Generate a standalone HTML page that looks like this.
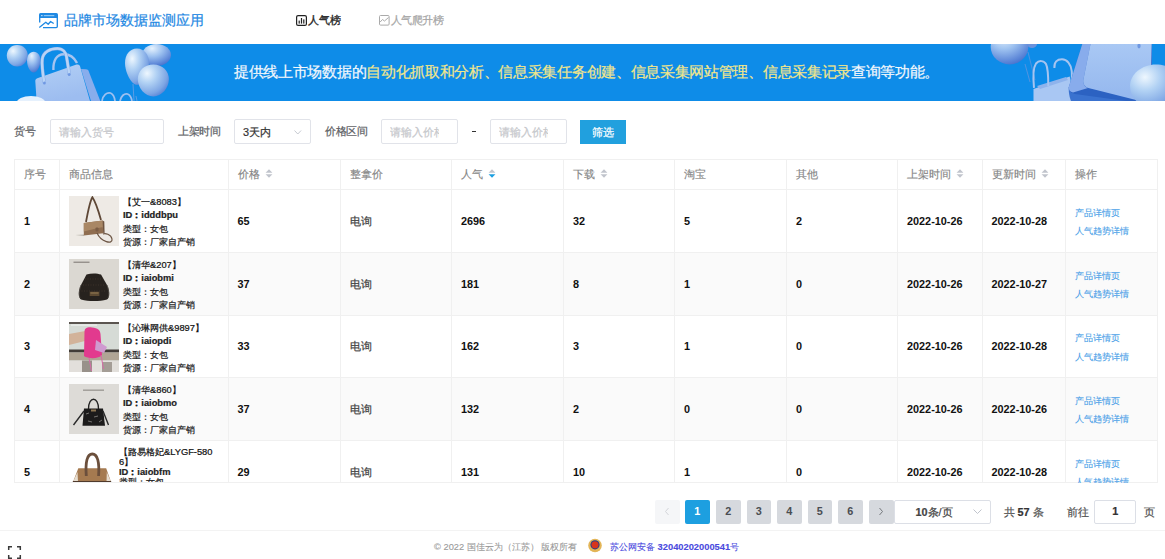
<!DOCTYPE html>
<html><head><meta charset="utf-8">
<style>
*{box-sizing:border-box;margin:0;padding:0}
html,body{width:1165px;height:559px;overflow:hidden;background:#fff}
body{font-family:"Liberation Sans",sans-serif;position:relative;color:#333;-webkit-text-stroke-width:0.22px}
.a{position:absolute;white-space:nowrap}
.title{left:64px;top:11px;font-size:14px;line-height:18px;color:#1f89e3}
.nav1{left:308px;top:11.8px;font-size:10.87px;line-height:16px;color:#2a2a2a;-webkit-text-stroke-width:0.35px;letter-spacing:-0.2px}
.nav2{left:390.5px;top:11.5px;font-size:10.87px;line-height:16px;color:#a6a6a6;letter-spacing:-0.5px}
.banner{left:0;top:44px;width:1165px;height:57px;background:#0e8ce8;overflow:hidden}
.btext{left:234px;top:63px;font-size:14.7px;line-height:18px;color:#f4f8fc;letter-spacing:-0.31px}
.btext b{font-weight:normal;color:#f2e68a}
.lbl{font-size:10.87px;line-height:14px;color:#606266;top:124px;letter-spacing:-0.35px}
.inp{top:119px;height:25px;border:1px solid #e1e3e9;border-radius:2px;background:#fff;overflow:hidden}
.ph{position:absolute;top:5px;font-size:10.87px;line-height:14px;color:#c6c8cc;white-space:nowrap}
.btn{left:580px;top:119.5px;width:46px;height:24.5px;background:#21a0de;border-radius:0;color:#fff;font-size:10.87px;line-height:24.5px;text-align:center}
.tbl{left:14.4px;top:159.5px;width:1143px;height:323px;overflow:hidden;border:1px solid #ebeef5;border-right:1px solid #ebeef5}
.row{position:absolute;left:0;width:1143px}
.hd{top:0;height:30px;border-bottom:1px solid #ebeef5;background:#fff}
.vl{position:absolute;top:0;width:1px;height:323px;background:#eef0f4}
.hl{position:absolute;left:0;width:1143px;height:1px;background:#ebeef5}
.th{position:absolute;top:9px;font-size:10.87px;line-height:13px;color:#858585;white-space:nowrap;-webkit-text-stroke-width:0.15px}
.td{position:absolute;font-size:10.87px;line-height:13px;color:#111;font-weight:bold;white-space:nowrap;-webkit-text-stroke-width:0}
.tdn{position:absolute;font-size:10.87px;line-height:13px;color:#444;white-space:nowrap}
.sort{display:inline-block;vertical-align:top;margin-left:5px;width:8px;height:9px;position:relative;top:1px}
.lk{position:absolute;font-size:9.32px;line-height:12px;color:#4a9fe8;white-space:nowrap;-webkit-text-stroke-width:0.12px}
.pi{position:absolute;font-size:9.32px;line-height:12px;color:#222;white-space:nowrap}
.pg{top:500px;width:24.5px;height:23.5px;border-radius:2px;background:#d6d9de;color:#4a4d52;font-weight:bold;-webkit-text-stroke-width:0;font-size:10.87px;line-height:23.5px;text-align:center}
.ftext{top:541px;font-size:9.32px;line-height:12px;color:#999;-webkit-text-stroke-width:0.1px}
</style></head><body>

<!-- header -->
<svg class="a" style="left:38px;top:12px" width="21" height="17" viewBox="0 0 21 17">
 <path d="M1 6 V2.6 Q1 1 2.6 1 H18.4 Q20 1 20 2.6 V6 Z" fill="#1f89e3"/>
 <rect x="3.2" y="3" width="1.3" height="1.2" fill="#cfe7fb"/>
 <rect x="5.8" y="3" width="10.5" height="1.2" fill="#8cc6f3"/>
 <path d="M1.7 5 V10.5 M19.3 5 V14.6 Q19.3 15.6 18.2 15.6 H5" fill="none" stroke="#1f89e3" stroke-width="1.35"/>
 <polyline points="1.3,15.5 7.8,10.2 10.2,12.2 12.6,9.5 15.7,11.5" fill="none" stroke="#1f89e3" stroke-width="1.3" stroke-linejoin="round"/>
</svg>
<div class="a title">品牌市场数据监测应用</div>

<svg class="a" style="left:296px;top:15px" width="11" height="11" viewBox="0 0 11 11">
 <rect x="0.6" y="0.6" width="9.8" height="9.8" rx="1.5" fill="none" stroke="#222" stroke-width="1.2"/>
 <rect x="2.6" y="5.6" width="1.2" height="3" fill="#222"/>
 <rect x="4.9" y="3" width="1.2" height="5.6" fill="#222"/>
 <rect x="7.2" y="4.4" width="1.2" height="4.2" fill="#222"/>
</svg>
<div class="a nav1">人气榜</div>
<svg class="a" style="left:379px;top:15px" width="11" height="11" viewBox="0 0 11 11">
 <rect x="0.5" y="0.5" width="9.6" height="9.6" rx="1" fill="none" stroke="#aaa" stroke-width="1"/>
 <polyline points="1.2,7 3.5,4.5 5.5,6 9.5,2.5" fill="none" stroke="#aaa" stroke-width="1"/>
</svg>
<div class="a nav2">人气爬升榜</div>

<!-- banner -->
<div class="a banner">
<svg width="1165" height="57" viewBox="0 44 1165 57" style="position:absolute;left:0;top:0">
 <defs>
  <radialGradient id="bl" cx="0.3" cy="0.28" r="0.85">
   <stop offset="0" stop-color="#eef7fe"/><stop offset="0.35" stop-color="#b2d2f4"/><stop offset="0.75" stop-color="#7ea6e4"/><stop offset="1" stop-color="#4d78d2"/>
  </radialGradient>
  <radialGradient id="bl2" cx="0.35" cy="0.2" r="0.9">
   <stop offset="0" stop-color="#e6f2fd"/><stop offset="0.4" stop-color="#9ec2f0"/><stop offset="0.8" stop-color="#5d87d8"/><stop offset="1" stop-color="#3f69c8"/>
  </radialGradient>
  <linearGradient id="bag" x1="0" y1="0" x2="0.3" y2="1">
   <stop offset="0" stop-color="#b2cff5"/><stop offset="1" stop-color="#9dbdf0"/>
  </linearGradient>
  <linearGradient id="bag2" x1="0" y1="0" x2="0" y2="1">
   <stop offset="0" stop-color="#a9c8f4"/><stop offset="1" stop-color="#94b7ee"/>
  </linearGradient>
 </defs>
 <!-- left -->
 <path d="M17.2 45 C23.5 45 27.8 50 27.8 55.5 C27.8 61.5 23 66.5 17.2 66.5 C11.2 66.5 6.8 61.5 6.8 55.5 C6.8 50 11 45 17.2 45Z" fill="url(#bl)"/>
 <path d="M33.7 51.7 C37.8 51.7 40.4 55.5 40.4 60.5 C40.4 66.5 37 72.4 33.7 72.4 C30.2 72.4 27 66.5 27 60.5 C27 55.5 29.6 51.7 33.7 51.7Z" fill="url(#bl2)"/>
 <path d="M53.4 70 C53 60 57 54.2 63.6 54.2 C70 54.2 74.5 58 77 63" fill="none" stroke="#a6c4f0" stroke-width="2.4"/>
 <path d="M81 69 L86 69.3 C87.5 69.4 88.2 70 88.6 71 L100.3 101 L91 101 Z" fill="#88adec"/>
 <path d="M38 78 L76.5 64.6 C78.5 64 79.6 64.8 80.1 66.5 L90 101 L36.6 101 L35.3 81 C35.2 79.6 36.2 78.6 38 78Z" fill="url(#bag)"/>
 <path d="M44.3 83 C43 75 41.5 65 42.2 59.3 C43.2 52 50 48.6 57.5 48.6 C63 48.6 66 52.5 66.6 57 C67.5 63 68.6 68 69.2 74.6" fill="none" stroke="#86a9e6" stroke-width="3.3"/>
 <path d="M44.3 83 C43 75 41.5 65 42.2 59.3 C43.2 52 50 48.6 57.5 48.6 C63 48.6 66 52.5 66.6 57 C67.5 63 68.6 68 69.2 74.6" fill="none" stroke="#b9d4f6" stroke-width="2.5"/>
 <ellipse cx="44.4" cy="83" rx="1.4" ry="1.5" fill="#6f98e2"/>
 <ellipse cx="69.2" cy="74.6" rx="1.4" ry="1.5" fill="#6f98e2"/>
 <ellipse cx="31" cy="103" rx="14.5" ry="7" fill="#e6f1fd"/>
 <path d="M102 101 C103 95 107 92 110.5 93 C113 94 114.5 97 115 101" fill="none" stroke="#9fc0f0" stroke-width="1.8"/>
 <path d="M120 101 C121 96 124.5 93 127.5 94 C130 95 131.5 98 132 101" fill="none" stroke="#9fc0f0" stroke-width="1.8"/>
 <path d="M133 84 L134 101 M136 96 L137 101" stroke="#7aa3e4" stroke-width="0.7"/>
 <path d="M156.5 44 C165 44 171 49 171 55 C171 61.5 164 66 156.5 66 C149 66 142 61.5 142 55 C142 49 148 44 156.5 44Z" fill="url(#bl2)"/>
 <path d="M137 48.6 C144.5 48.6 149 55 149 63 C149 72 143 84.8 137 84.8 C131 84.8 125 72 125 63 C125 55 129.5 48.6 137 48.6Z" fill="url(#bl)"/>
 <path d="M153.3 64.4 C162.5 64.4 168.9 71 168.9 79 C168.9 88 161.5 96.5 153.3 96.5 C145 96.5 137.8 88 137.8 79 C137.8 71 144 64.4 153.3 64.4Z" fill="url(#bl)"/>
 <!-- right -->
 <ellipse cx="1032" cy="44" rx="5" ry="4" fill="#6b92dc"/>
 <path d="M1009.5 30 C1020 30 1028.4 38 1028.4 47 C1028.4 57 1019 64.4 1009.5 64.4 C1000 64.4 990.7 57 990.7 47 C990.7 38 999 30 1009.5 30Z" fill="url(#bl2)"/>
 <path d="M1025 64 L1030 82 M1028 52 L1035 80" stroke="#6f97dc" stroke-width="0.7" fill="none"/>
 <path d="M1033.5 89 L1069.7 76.6 L1075 101 L1033.5 101 Z" fill="#a9c7f3"/>
 <path d="M1037 86 L1066 77 L1068 80 L1040 89 Z" fill="#8fb3ec"/>
 <path d="M1034 87.8 C1033 78 1033 68 1036 63.5 C1039 60 1044 60.5 1046 64 C1048 68 1048.3 78 1048.3 86" fill="none" stroke="#a6c4f0" stroke-width="2"/>
 <path d="M1054.4 68 C1054 62 1057 59.3 1062 59.3 C1067 59.3 1071 64 1071.7 71 C1072.5 79 1071 88 1071.5 94" fill="none" stroke="#a6c4f0" stroke-width="2"/>
 <path d="M1082.3 44 L1152 44 L1152 101 L1071 101 C1069 96 1068.5 90 1068.8 87 Z" fill="#3a72cf"/>
 <path d="M1068.8 87 C1069 91 1071 93 1075 94 L1126 101 L1152 101 L1088 88 Z" fill="#2c62c2"/>
 <path d="M1082.3 44 L1090.5 44 L1083.3 80 C1083 84 1084.5 87 1088 88 L1073 92.5 C1070 92 1068.6 90 1068.8 87 Z" fill="#88acec"/>
 <path d="M1090.5 44 L1151.6 44 L1150 101 L1140 101 L1088.5 88 C1084.5 86.8 1083 84 1083.3 80 Z" fill="url(#bag2)"/>
 <ellipse cx="1139" cy="46" rx="1.6" ry="2.4" fill="#6f98e2"/>
 <path d="M1156 64.4 C1170 64.4 1180 74 1180 86 C1180 98 1170 110 1156 110 C1142 110 1130 98 1130 86 C1130 74 1142 64.4 1156 64.4Z" fill="url(#bl)"/>
</svg>
</div>
<div class="a btext">提供线上市场数据的<b>自动化抓取和分析、信息采集任务创建、信息采集网站管理、信息采集记录</b>查询等功能。</div>

<!-- filters -->
<div class="a lbl" style="left:14.4px">货号</div>
<div class="a inp" style="left:50px;width:114px"><span class="ph" style="left:8px">请输入货号</span></div>
<div class="a lbl" style="left:178px">上架时间</div>
<div class="a inp" style="left:234px;width:77px"><span class="ph" style="left:8px;color:#333">3天内</span>
 <svg style="position:absolute;left:59px;top:9.5px" width="8" height="5" viewBox="0 0 8 5"><polyline points="0.5,0.5 3.8,4 7.1,0.5" fill="none" stroke="#c0c4cc" stroke-width="0.9"/></svg></div>
<div class="a lbl" style="left:325px">价格区间</div>
<div class="a inp" style="left:381px;width:77px"><span class="ph" style="left:8px;width:49px;overflow:hidden">请输入价格</span></div>
<div class="a" style="left:471.5px;top:131px;width:4px;height:1.3px;background:#333"></div>
<div class="a inp" style="left:489.5px;width:77px"><span class="ph" style="left:8px;width:49px;overflow:hidden">请输入价格</span></div>
<div class="a btn">筛选</div>

<!-- table -->
<div class="a" style="left:14px;top:252px;width:1143px;height:63px;background:#fafafa"></div>
<div class="a" style="left:14px;top:377px;width:1143px;height:63px;background:#fafafa"></div>
<div class="a" style="left:14px;top:159px;width:1144px;height:1px;background:#f0f0f0"></div>
<div class="a" style="left:14px;top:189px;width:1144px;height:1px;background:#f0f0f0"></div>
<div class="a" style="left:14px;top:252px;width:1144px;height:1px;background:#f0f0f0"></div>
<div class="a" style="left:14px;top:315px;width:1144px;height:1px;background:#f0f0f0"></div>
<div class="a" style="left:14px;top:377px;width:1144px;height:1px;background:#f0f0f0"></div>
<div class="a" style="left:14px;top:440px;width:1144px;height:1px;background:#f0f0f0"></div>
<div class="a" style="left:14px;top:482px;width:1144px;height:1px;background:#f0f0f0"></div>
<div class="a" style="left:14px;top:159px;width:1px;height:324px;background:#f0f0f0"></div>
<div class="a" style="left:59px;top:159px;width:1px;height:324px;background:#f0f0f0"></div>
<div class="a" style="left:227.5px;top:159px;width:1px;height:324px;background:#f0f0f0"></div>
<div class="a" style="left:339.5px;top:159px;width:1px;height:324px;background:#f0f0f0"></div>
<div class="a" style="left:451px;top:159px;width:1px;height:324px;background:#f0f0f0"></div>
<div class="a" style="left:563px;top:159px;width:1px;height:324px;background:#f0f0f0"></div>
<div class="a" style="left:674px;top:159px;width:1px;height:324px;background:#f0f0f0"></div>
<div class="a" style="left:786px;top:159px;width:1px;height:324px;background:#f0f0f0"></div>
<div class="a" style="left:897px;top:159px;width:1px;height:324px;background:#f0f0f0"></div>
<div class="a" style="left:981.5px;top:159px;width:1px;height:324px;background:#f0f0f0"></div>
<div class="a" style="left:1065px;top:159px;width:1px;height:324px;background:#f0f0f0"></div>
<div class="a" style="left:1157px;top:159px;width:1px;height:324px;background:#f0f0f0"></div>
<div class="a th" style="left:24px;top:168px">序号</div>
<div class="a th" style="left:69px;top:168px">商品信息</div>
<div class="a th" style="left:237.5px;top:168px">价格<svg class="sort" width="8" height="10" viewBox="0 0 8 10"><path d="M4 0.3 L7.8 4.2 H0.2Z" fill="#c0c4cc"/><path d="M4 9.7 L7.8 5.8 H0.2Z" fill="#c0c4cc"/></svg></div>
<div class="a th" style="left:349.5px;top:168px">整拿价</div>
<div class="a th" style="left:461px;top:168px">人气<svg class="sort" width="8" height="10" viewBox="0 0 8 10"><path d="M4 0.3 L7.8 4.2 H0.2Z" fill="#c0c4cc"/><path d="M4 9.7 L7.8 5.8 H0.2Z" fill="#1d9fe0"/></svg></div>
<div class="a th" style="left:573px;top:168px">下载<svg class="sort" width="8" height="10" viewBox="0 0 8 10"><path d="M4 0.3 L7.8 4.2 H0.2Z" fill="#c0c4cc"/><path d="M4 9.7 L7.8 5.8 H0.2Z" fill="#c0c4cc"/></svg></div>
<div class="a th" style="left:684px;top:168px">淘宝</div>
<div class="a th" style="left:796px;top:168px">其他</div>
<div class="a th" style="left:907px;top:168px">上架时间<svg class="sort" width="8" height="10" viewBox="0 0 8 10"><path d="M4 0.3 L7.8 4.2 H0.2Z" fill="#c0c4cc"/><path d="M4 9.7 L7.8 5.8 H0.2Z" fill="#c0c4cc"/></svg></div>
<div class="a th" style="left:991.5px;top:168px">更新时间<svg class="sort" width="8" height="10" viewBox="0 0 8 10"><path d="M4 0.3 L7.8 4.2 H0.2Z" fill="#c0c4cc"/><path d="M4 9.7 L7.8 5.8 H0.2Z" fill="#c0c4cc"/></svg></div>
<div class="a th" style="left:1075px;top:168px">操作</div>
<div class="a td" style="left:24px;top:214.5px">1</div>
<div class="a" style="left:69px;top:196px;width:50px;height:50px;overflow:hidden"><svg width="50" height="50" viewBox="0 0 50 50"><rect width="50" height="50" fill="#eeeae5"/>
<path d="M17 26 C19 15 21 5 23.4 1.2 C26 5 29.5 15 32 24" fill="none" stroke="#5e4736" stroke-width="1.8"/>
<path d="M6.3 39 L15 38.4 L15 40 Z" fill="#b8b3ab"/>
<path d="M14.8 27.1 L33.6 24.4 L34.2 37.3 L14.8 39.4 Z" fill="#8f6d50"/>
<path d="M14.8 27.1 L33.6 24.4 L34 31 L27 32.6 L14.8 35.6 Z" fill="#a98765"/>
<path d="M33.6 24.4 L35.3 25.5 L35.6 37 L34.2 37.3Z" fill="#6f5440"/>
<rect x="26.5" y="31.5" width="3" height="4" rx="1" fill="#7b5d45"/>
<path d="M28 37 C32 46 44 49 43 43 C42 38 36 37 34 38" fill="none" stroke="#6b5443" stroke-width="1.2"/>
</svg></div>
<div class="a pi" style="left:123px;top:196px;color:#111">【艾一&amp;8083】</div>
<div class="a pi" style="left:123px;top:209.3px;font-weight:bold">ID：idddbpu</div>
<div class="a pi" style="left:123px;top:222.6px">类型：女包</div>
<div class="a pi" style="left:123px;top:236px">货源：厂家自产销</div>
<div class="a td" style="left:237.5px;top:214.5px">65</div>
<div class="a tdn" style="left:349.5px;top:214.5px">电询</div>
<div class="a td" style="left:461px;top:214.5px">2696</div>
<div class="a td" style="left:573px;top:214.5px">32</div>
<div class="a td" style="left:684px;top:214.5px">5</div>
<div class="a td" style="left:796px;top:214.5px">2</div>
<div class="a td" style="left:907px;top:214.5px">2022-10-26</div>
<div class="a td" style="left:991.5px;top:214.5px">2022-10-28</div>
<div class="a lk" style="left:1075px;top:206.5px">产品详情页</div>
<div class="a lk" style="left:1075px;top:225.0px">人气趋势详情</div>
<div class="a td" style="left:24px;top:277.5px">2</div>
<div class="a" style="left:69px;top:259px;width:50px;height:50px;overflow:hidden"><svg width="50" height="50" viewBox="0 0 50 50"><rect width="50" height="50" fill="#dbd8d2"/>
<rect x="4.5" y="2.6" width="16" height="1.3" fill="#8f8b85"/>
<path d="M17.5 15.5 C22 14 28 14 32 15.5 L38 26 C41 32 41 38 38 40.5 C30 42.5 20 42.5 12 40.5 C9 38 9 32 12 26 Z" fill="#27221e"/>
<path d="M12 26 C10 31 10 37 11 39 M38 26 C40 31 40 37 39 39" fill="none" stroke="#55504a" stroke-width="0.8"/>
<path d="M16 20 L34 20 M14 26 L36 26 M12.5 32 L37.5 32" stroke="#4a3f33" stroke-width="0.6" stroke-dasharray="1 1.5"/>
<rect x="20.7" y="32.7" width="9.7" height="4.3" fill="#5d4a32"/>
<rect x="21.5" y="33.6" width="8" height="0.8" fill="#a88a5c"/>
</svg></div>
<div class="a pi" style="left:123px;top:259px;color:#111">【清华&amp;207】</div>
<div class="a pi" style="left:123px;top:272.3px;font-weight:bold">ID：iaiobmi</div>
<div class="a pi" style="left:123px;top:285.6px">类型：女包</div>
<div class="a pi" style="left:123px;top:299px">货源：厂家自产销</div>
<div class="a td" style="left:237.5px;top:277.5px">37</div>
<div class="a tdn" style="left:349.5px;top:277.5px">电询</div>
<div class="a td" style="left:461px;top:277.5px">181</div>
<div class="a td" style="left:573px;top:277.5px">8</div>
<div class="a td" style="left:684px;top:277.5px">1</div>
<div class="a td" style="left:796px;top:277.5px">0</div>
<div class="a td" style="left:907px;top:277.5px">2022-10-26</div>
<div class="a td" style="left:991.5px;top:277.5px">2022-10-27</div>
<div class="a lk" style="left:1075px;top:269.5px">产品详情页</div>
<div class="a lk" style="left:1075px;top:288.0px">人气趋势详情</div>
<div class="a td" style="left:24px;top:340.0px">3</div>
<div class="a" style="left:69px;top:322px;width:50px;height:50px;overflow:hidden"><svg width="50" height="50" viewBox="0 0 50 50"><rect width="50" height="50" fill="#d6dbd6"/>
<rect x="0" y="0" width="50" height="2" fill="#5b5550"/>
<rect x="2" y="2.5" width="26" height="1.2" fill="#ffffff" opacity="0.6"/>
<rect x="0" y="27.5" width="50" height="3" fill="#423c38"/>
<rect x="0" y="30.5" width="50" height="8" fill="#b0a595"/>
<rect x="0" y="38.5" width="50" height="11.5" fill="#e2dfdb"/>
<rect x="13" y="38.5" width="10" height="11.5" fill="#98918a"/>
<rect x="33" y="40" width="10" height="10" fill="#a49d96"/>
<path d="M0 12 L19 8.5 L20 18 L0 23 Z" fill="#d2b39a"/>
<path d="M15.5 10 C15.5 5 20 5 23 5.5 C29 6 31 8 31.5 12 L33 33 C30 37 19 37 15 34 Z" fill="#e23a8e"/>
<path d="M27 18 L38 25 L35 31 L26 28 Z" fill="#cf9ad0"/>
<path d="M20 36 L22.5 49 M32 33 L34.5 47" stroke="#d86aa8" stroke-width="1"/>
</svg></div>
<div class="a pi" style="left:123px;top:322px;color:#111">【沁琳网供&amp;9897】</div>
<div class="a pi" style="left:123px;top:335.3px;font-weight:bold">ID：iaiopdi</div>
<div class="a pi" style="left:123px;top:348.6px">类型：女包</div>
<div class="a pi" style="left:123px;top:362px">货源：厂家自产销</div>
<div class="a td" style="left:237.5px;top:340.0px">33</div>
<div class="a tdn" style="left:349.5px;top:340.0px">电询</div>
<div class="a td" style="left:461px;top:340.0px">162</div>
<div class="a td" style="left:573px;top:340.0px">3</div>
<div class="a td" style="left:684px;top:340.0px">1</div>
<div class="a td" style="left:796px;top:340.0px">0</div>
<div class="a td" style="left:907px;top:340.0px">2022-10-26</div>
<div class="a td" style="left:991.5px;top:340.0px">2022-10-28</div>
<div class="a lk" style="left:1075px;top:332.0px">产品详情页</div>
<div class="a lk" style="left:1075px;top:350.5px">人气趋势详情</div>
<div class="a td" style="left:24px;top:402.5px">4</div>
<div class="a" style="left:69px;top:384px;width:50px;height:50px;overflow:hidden"><svg width="50" height="50" viewBox="0 0 50 50"><rect width="50" height="50" fill="#dddbd7"/>
<rect x="14" y="5.6" width="21" height="1.1" fill="#8c8984"/>
<path d="M19.5 25 C19.5 12 29.5 12 29.5 25" fill="none" stroke="#222" stroke-width="1.3"/>
<path d="M15 24.6 L34 24.6 L36 41.7 L13.5 41.7 Z" fill="#1c1b1b"/>
<path d="M15 27 L4.5 41 M34 27 L39.5 41" stroke="#2a2a2a" stroke-width="1.4"/>
<path d="M17 30 L20 29 M25 33 L29 32 M19 37 L23 38 M30 38 L33 36" stroke="#8d8a86" stroke-width="0.8"/>
<rect x="22" y="25.5" width="5" height="2" fill="#8d7653"/>
</svg></div>
<div class="a pi" style="left:123px;top:384px;color:#111">【清华&amp;860】</div>
<div class="a pi" style="left:123px;top:397.3px;font-weight:bold">ID：iaiobmo</div>
<div class="a pi" style="left:123px;top:410.6px">类型：女包</div>
<div class="a pi" style="left:123px;top:424px">货源：厂家自产销</div>
<div class="a td" style="left:237.5px;top:402.5px">37</div>
<div class="a tdn" style="left:349.5px;top:402.5px">电询</div>
<div class="a td" style="left:461px;top:402.5px">132</div>
<div class="a td" style="left:573px;top:402.5px">2</div>
<div class="a td" style="left:684px;top:402.5px">0</div>
<div class="a td" style="left:796px;top:402.5px">0</div>
<div class="a td" style="left:907px;top:402.5px">2022-10-26</div>
<div class="a td" style="left:991.5px;top:402.5px">2022-10-26</div>
<div class="a lk" style="left:1075px;top:394.5px">产品详情页</div>
<div class="a lk" style="left:1075px;top:413.0px">人气趋势详情</div>
<div class="a td" style="left:24px;top:465.5px">5</div>
<div class="a" style="left:69px;top:447px;width:46px;height:35px;overflow:hidden"><svg width="46" height="50" viewBox="0 0 46 50"><rect width="46" height="50" fill="#fff"/>
<path d="M9.3 21.3 L37.2 21.3 L42 35 L4 35 Z" fill="#a57a50"/>
<path d="M4 35 L8.5 25 L9 35Z M42 35 L37.8 25 L37.5 35Z" fill="#e6ddd0"/>
<path d="M4 34 L42 34 L42.5 35.5 L3.5 35.5Z" fill="#4f3a2c"/>
<path d="M17.3 29 C16.3 15 18 7 23.3 7 C28.6 7 30.5 15 29.6 29" fill="none" stroke="#6b4f3c" stroke-width="2.8"/>
</svg></div>
<div class="a" style="left:119px;top:440px;width:110px;height:42px;overflow:hidden">
<div class="pi" style="left:0;top:6.7px;color:#111;line-height:10px">【路易格妃&amp;LYGF-580<br>6】</div>
<div class="pi" style="left:0;top:26.7px;font-weight:bold;line-height:10px">ID：iaiobfm</div>
<div class="pi" style="left:0;top:36.7px;line-height:10px">类型：女包</div>
<div class="pi" style="left:0;top:46.7px;line-height:10px">货源：厂家自产销</div>
</div>
<div class="a td" style="left:237.5px;top:465.5px">29</div>
<div class="a tdn" style="left:349.5px;top:465.5px">电询</div>
<div class="a td" style="left:461px;top:465.5px">131</div>
<div class="a td" style="left:573px;top:465.5px">10</div>
<div class="a td" style="left:684px;top:465.5px">1</div>
<div class="a td" style="left:796px;top:465.5px">0</div>
<div class="a td" style="left:907px;top:465.5px">2022-10-26</div>
<div class="a td" style="left:991.5px;top:465.5px">2022-10-28</div>
<div class="a lk" style="left:1075px;top:457.5px">产品详情页</div>
<div class="a lk" style="left:1075px;top:476.0px">人气趋势详情</div>
<div class="a" style="left:0;top:483px;width:1165px;height:17px;background:#fff"></div>
<!-- pagination -->
<div class="a pg" style="left:655px;background:#f5f6f8;color:#c0c4cc;font-weight:normal"><svg width="6" height="9" viewBox="0 0 6 9" style="margin-top:7px"><polyline points="4.5,1 1.5,4.5 4.5,8" fill="none" stroke="#cfd1d6" stroke-width="0.9"/></svg></div>
<div class="a pg" style="left:685px;background:#1d9fe0;color:#fff">1</div>
<div class="a pg" style="left:716px">2</div>
<div class="a pg" style="left:746.5px">3</div>
<div class="a pg" style="left:777px">4</div>
<div class="a pg" style="left:807.5px">5</div>
<div class="a pg" style="left:838px">6</div>
<div class="a pg" style="left:869px"><svg width="6" height="9" viewBox="0 0 6 9" style="margin-top:7px"><polyline points="1.5,1 4.5,4.5 1.5,8" fill="none" stroke="#6b6e73" stroke-width="0.9"/></svg></div>
<div class="a" style="left:893.5px;top:500px;width:97.5px;height:23.5px;border:1px solid #dcdfe6;border-radius:2px;background:#fff"></div>
<div class="a" style="left:915.5px;top:505px;font-size:10.87px;line-height:14px;color:#444"><b>10</b>条/页</div>
<svg class="a" style="left:973px;top:509px" width="9" height="5" viewBox="0 0 9 5"><polyline points="0.5,0.5 4.5,4.5 8.5,0.5" fill="none" stroke="#c0c4cc" stroke-width="1"/></svg>
<div class="a" style="left:1003.5px;top:505px;font-size:10.87px;line-height:14px;color:#555">共 <b style="color:#333">57</b> 条</div>
<div class="a" style="left:1067px;top:505px;font-size:10.87px;line-height:14px;color:#555">前往</div>
<div class="a" style="left:1094.4px;top:500px;width:42px;height:23.5px;border:1px solid #dcdfe6;border-radius:2px;background:#fff;text-align:center;font-size:10.87px;line-height:21.5px;color:#333;font-weight:bold">1</div>
<div class="a" style="left:1143.5px;top:505px;font-size:10.87px;line-height:14px;color:#555">页</div>

<!-- footer -->
<div class="a" style="left:0;top:530px;width:1165px;height:1px;background:#f3f3f3"></div>
<svg class="a" style="left:7px;top:545px" width="15" height="15" viewBox="0 0 15 15">
 <path d="M1.7 5 V1.7 H5 M10 1.7 H13.3 V5 M13.3 10 V13.3 H10 M5 13.3 H1.7 V10" fill="none" stroke="#3a3a3a" stroke-width="1.5"/>
</svg>
<div class="a ftext" style="left:434px">© 2022 国佳云为（江苏） 版权所有</div>
<svg class="a" style="left:588px;top:538px" width="14" height="15" viewBox="0 0 14 15">
 <circle cx="7" cy="7.5" r="6.8" fill="#e3b557"/>
 <circle cx="7" cy="6.8" r="4.6" fill="#1d3b8f"/>
 <circle cx="7" cy="6.8" r="3.6" fill="#d8341c"/>
</svg>
<div class="a ftext" style="left:610px;color:#4a4ade">苏公网安备 <b>32040202000541</b>号</div>

</body></html>
